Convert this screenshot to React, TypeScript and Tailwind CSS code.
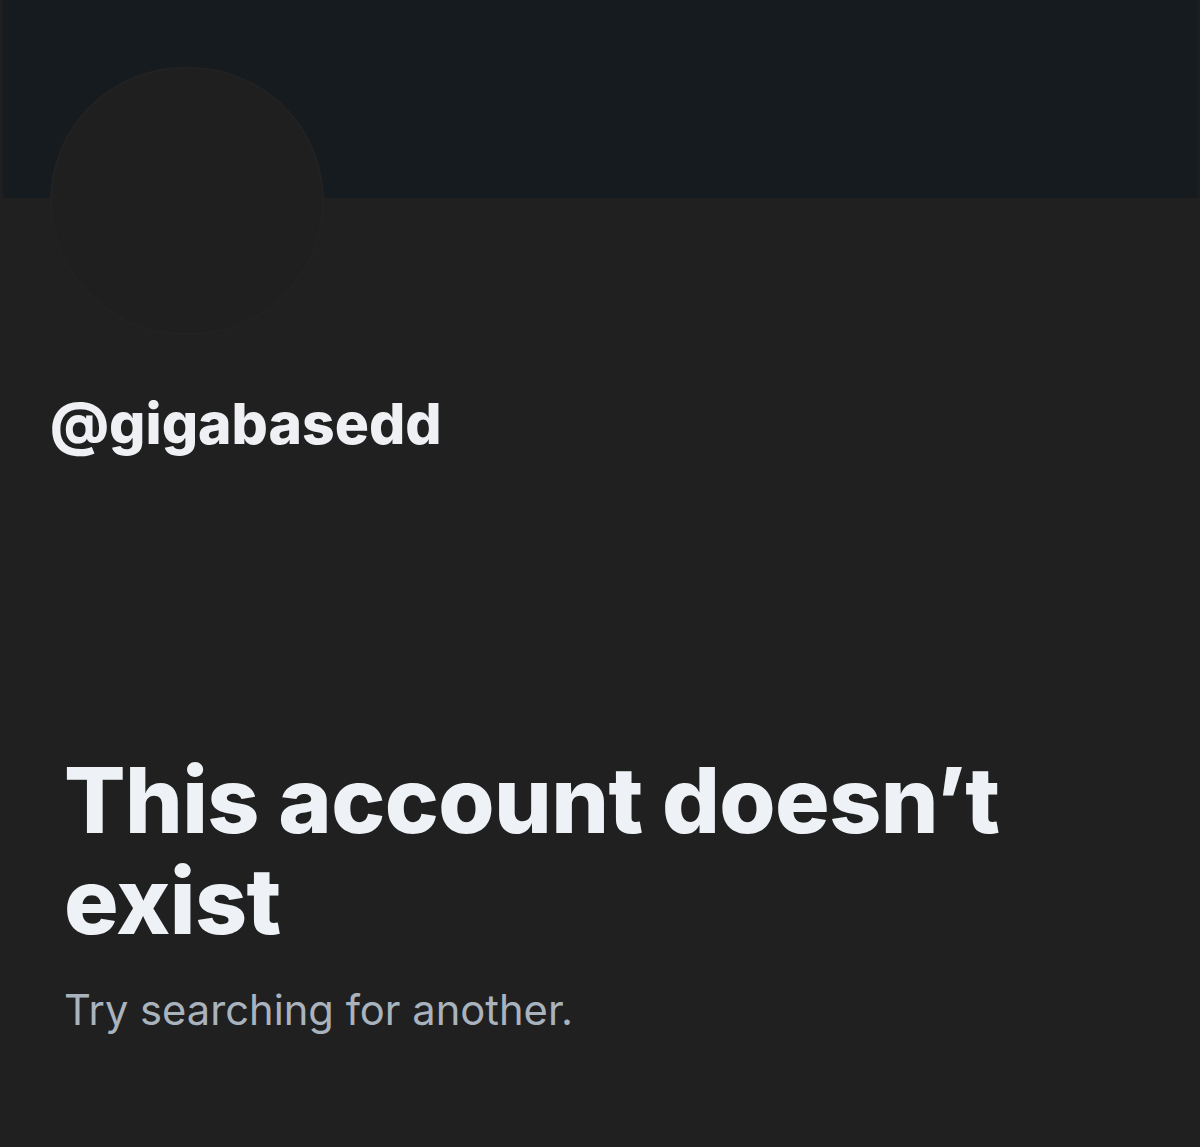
import React from "react";

export default function App() {
  return (
    <div
      className="w-[1200px] h-[1147px] bg-[#202020] overflow-hidden flex flex-col"
      style={{ fontFamily: "Inter, 'Noto Sans', sans-serif" }}
    >
      <div className="h-[198px] shrink-0 bg-[#161b1f] border-l-[3px] border-l-[#1d1f20] border-r-[3px] border-r-[#1a1e21]" />
      <div className="relative flex flex-col">
        <div className="absolute left-[50px] top-[-131px] w-[274px] h-[268px] rounded-full bg-[#1f1f1f] border-2 border-[#222222]" />
        <div className="h-[137px]" />
        <div className="pl-[50px] pt-[54px] text-[57px] leading-[70px] font-extrabold text-[#eef0f3] tracking-[0px]">
          @gigabasedd
        </div>
        <div className="pl-[64px] pt-[291px] pr-[150px]">
          <h1 className="text-[91px] leading-[101px] font-extrabold text-[#eef1f5] tracking-[-0.6px]">
            This account doesn’t exist
          </h1>
          <p className="mt-[30px] text-[41.7px] leading-[56px] text-[#a9b3be]">
            Try searching for another.
          </p>
        </div>
      </div>
    </div>
  );
}
